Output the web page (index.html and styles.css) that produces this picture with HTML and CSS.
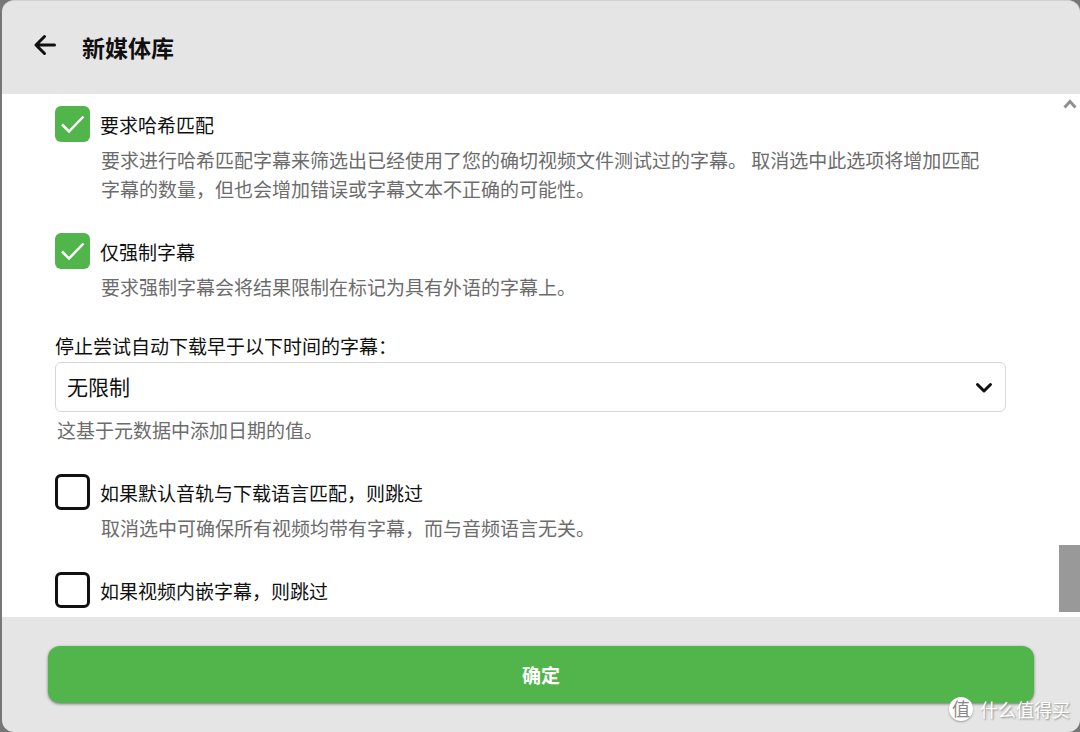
FILE: index.html
```html
<!DOCTYPE html>
<html lang="zh-CN">
<head>
<meta charset="utf-8">
<meta name="viewport" content="width=device-width, initial-scale=1">
<title>新媒体库</title>
<link rel="stylesheet" href="styles.css">
</head>
<body>
<main class="dialog">
  <header class="header">
    <button class="back" type="button" aria-label="返回">
      <svg width="24" height="24" viewBox="0 0 24 24" fill="none" stroke="currentColor" stroke-width="3" stroke-linecap="round" stroke-linejoin="round"><path d="M21.500 12H3M11.500 3.500L3 12l8.500 8.500"/></svg>
    </button>
    <h1 class="title">新媒体库</h1>
  </header>
  <div class="body">
    <form class="form" id="library-form">
      <div class="field">
        <label class="check-row"><input class="check" type="checkbox" checked><span>要求哈希匹配</span></label>
        <p class="hint hint-indent">要求进行哈希匹配字幕来筛选出已经使用了您的确切视频文件测试过的字幕。 取消选中此选项将增加匹配字幕的数量，但也会增加错误或字幕文本不正确的可能性。</p>
      </div>
      <div class="field">
        <label class="check-row"><input class="check" type="checkbox" checked><span>仅强制字幕</span></label>
        <p class="hint hint-indent">要求强制字幕会将结果限制在标记为具有外语的字幕上。</p>
      </div>
      <div class="field">
        <label class="select-label" for="age-limit">停止尝试自动下载早于以下时间的字幕：</label>
        <div class="select-wrap">
          <select class="select" id="age-limit"><option>无限制</option></select>
          <svg class="chevron" width="18" height="12" viewBox="0 0 18 12" fill="none" stroke="currentColor" stroke-width="3" stroke-linecap="round" stroke-linejoin="round"><path d="M2.500 2.500L9 9l6.500-6.500"/></svg>
        </div>
        <p class="hint">这基于元数据中添加日期的值。</p>
      </div>
      <div class="field">
        <label class="check-row"><input class="check" type="checkbox"><span>如果默认音轨与下载语言匹配，则跳过</span></label>
        <p class="hint hint-indent">取消选中可确保所有视频均带有字幕，而与音频语言无关。</p>
      </div>
      <div class="field">
        <label class="check-row"><input class="check" type="checkbox"><span>如果视频内嵌字幕，则跳过</span></label>
      </div>
    </form>
    <div class="scrollbar" aria-hidden="true">
      <svg width="14" height="12" viewBox="0 0 14 12" fill="none" stroke="#909090" stroke-width="3"><path d="M1.500 9.500L7 3.500l5.500 6"/></svg>
      <div class="thumb"></div>
    </div>
  </div>
  <footer class="footer">
    <button class="submit" type="submit" form="library-form">确定</button>
  </footer>
</main>
<div class="watermark"><span class="badge">值</span><span>什么值得买</span></div>
</body>
</html>
```
FILE: styles.css
```css
* {
  box-sizing: border-box;
}

body {
  margin: 0;
  padding-left: 2px;
  background: #777;
  color: #101010;
  font-family: "Noto Sans CJK SC", sans-serif;
  font-size: 19px;
  line-height: 29px;
}

button,
select {
  font: inherit;
  color: inherit;
}

.dialog {
  display: flex;
  flex-direction: column;
  height: 100vh;
  border-top: 1px solid #d0d0d0;
  border-radius: 12px;
  background: #e5e5e5;
  overflow: hidden;
}

.header {
  display: flex;
  align-items: center;
  gap: 25px;
  padding: 26px 31px 27px;
}

.back {
  display: flex;
  height: 40px;
  padding: 6px 0 0;
  border: 0;
  background: none;
}

.title {
  margin: 0;
  font-size: 23px;
  line-height: 40px;
}

.body {
  flex: 1;
  display: flex;
  min-height: 0;
  background: #fff;
}

.form {
  flex: 1;
  display: flex;
  flex-direction: column;
  gap: 30px;
  padding: 12px 53px 0;
  overflow: hidden;
}

.check-row {
  display: flex;
  align-items: center;
  gap: 10px;
  height: 36px;
}

.check {
  appearance: none;
  width: 35px;
  height: 36px;
  margin: 0;
  border: 3px solid #101010;
  border-radius: 6px;
  background: #fff;
}

.check:checked {
  border: 0;
  background: #52b54b url("data:image/svg+xml,%3Csvg xmlns='http://www.w3.org/2000/svg' viewBox='0 0 35 36'%3E%3Cpath d='M7 18.500l7 7L28.500 10.500' fill='none' stroke='white' stroke-width='2.500'/%3E%3C/svg%3E");
}

.hint {
  margin: 3px 0 0 2px;
  color: #6c6c6c;
}

.hint-indent {
  margin-left: 46px;
  padding-right: 14px;
}

.select-label {
  display: block;
}

.select-wrap {
  position: relative;
  margin-top: 2px;
}

.select {
  display: block;
  appearance: none;
  width: 100%;
  height: 50px;
  padding: 0 48px 2px 11px;
  border: 1px solid #d6d6d6;
  border-radius: 6px;
  background: #fff;
  font-size: 21px;
}

.chevron {
  position: absolute;
  top: 20px;
  right: 13px;
  pointer-events: none;
}

.scrollbar {
  display: flex;
  flex-direction: column;
  justify-content: space-between;
  align-items: center;
  width: 21px;
  padding: 4px 0 5px;
}

.thumb {
  width: 100%;
  height: 67px;
  background: #999;
}

.footer {
  padding: 29px 46px;
}

.submit {
  display: block;
  width: 100%;
  height: 57px;
  border: 0;
  border-radius: 12px;
  background: #52b54b;
  box-shadow: 0 1px 3px rgba(0, 0, 0, 0.5);
  color: #fff;
  font-weight: 700;
}

.watermark {
  position: absolute;
  right: 10px;
  bottom: 10px;
  display: flex;
  align-items: center;
  gap: 7px;
  color: #fff;
  font-size: 18px;
  line-height: 26px;
  text-shadow: 1px 1px 2px #888;
}

.badge {
  width: 24px;
  height: 24px;
  border-radius: 50%;
  background: #fff;
  box-shadow: 0 1px 2px #999;
  color: #888;
  line-height: 22px;
  text-align: center;
  text-shadow: none;
}
```
